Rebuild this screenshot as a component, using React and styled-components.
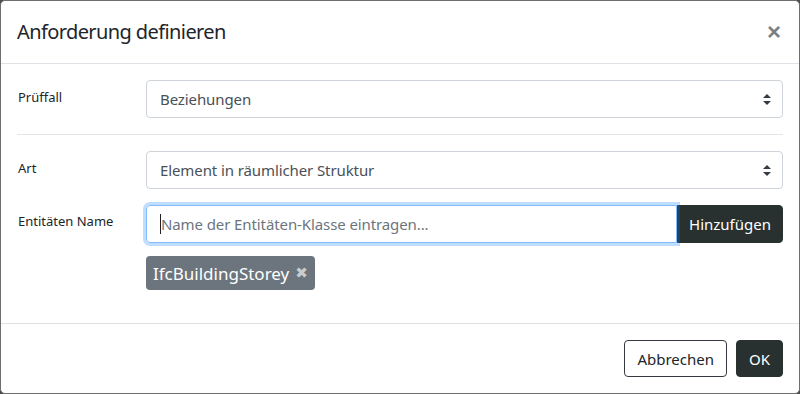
import React from "react";
import styled, { createGlobalStyle } from "styled-components";

const Global = createGlobalStyle`
  html, body { margin: 0; padding: 0; background: #4b4b4b; }
  body { font-family: "Noto Sans", "Open Sans", sans-serif; color: #212529; }
  * { box-sizing: border-box; }
`;

const Dialog = styled.div`
  width: 800px;
  height: 394px;
  background: #fff;
  border: 1px solid #6e6e6e;
  border-radius: 5px;
  display: flex;
  flex-direction: column;
  overflow: hidden;
`;

const Header = styled.div`
  display: flex;
  align-items: center;
  justify-content: space-between;
  padding: 16px;
  height: 63px;
  border-bottom: 1px solid #dee2e6;
`;

const Title = styled.h5`
  margin: 0;
  font-size: 20px;
  font-weight: 400;
  line-height: 30px;
  letter-spacing: -0.6px;
`;

const Close = styled.button`
  border: 0;
  background: transparent;
  padding: 0;
  margin-right: 2px;
  font-size: 24px;
  font-weight: 700;
  line-height: 1;
  color: #000;
  opacity: 0.5;
  font-family: "Liberation Sans", sans-serif;
  cursor: pointer;
`;

const Body = styled.div`
  flex: 1;
  padding: 16px;
`;

const Row = styled.div`
  display: grid;
  grid-template-columns: 129px 1fr;
  margin-bottom: ${(p) => p.$mb ?? 16}px;
`;

const Label = styled.label`
  font-size: 13px;
  padding-top: ${(p) => p.$pt ?? 8}px;
  line-height: 20px;
  padding-left: 1px;
`;

const Divider = styled.hr`
  margin: 0 0 16px;
  border: 0;
  border-top: 1px solid rgba(0, 0, 0, 0.1);
`;

const SelectBox = styled.div`
  height: 38px;
  border: 1px solid #ced4da;
  border-radius: 4px;
  display: flex;
  align-items: center;
  justify-content: space-between;
  padding: 0 11px 0 13px;
  font-size: 15px;
  color: #495057;
  letter-spacing: -0.1px;
`;

const InputGroup = styled.div`
  display: flex;
  height: 38px;
`;

const TextInput = styled.div`
  flex: 1;
  border: 1px solid #80bdff;
  border-radius: 4px 0 0 4px;
  box-shadow: 0 0 0 3px rgba(0, 123, 255, 0.25);
  display: flex;
  align-items: center;
  padding: 0 13px;
  font-size: 15px;
  color: #6c757d;
  letter-spacing: -0.1px;
  position: relative;
  z-index: 1;
`;

const Caret = styled.span`
  display: inline-block;
  width: 1px;
  height: 20px;
  background: #222;
`;

const DarkButton = styled.button`
  background: #283130;
  color: #fff;
  border: 1px solid #283130;
  font-family: inherit;
  font-size: 15px;
  padding: 0 ${(p) => p.$px ?? 11}px;
  border-radius: ${(p) => p.$radius || "4px"};
  height: ${(p) => p.$h || 38}px;
  cursor: pointer;
`;

const OutlineButton = styled.button`
  background: #fff;
  color: #212529;
  border: 1px solid #343a40;
  font-family: inherit;
  font-size: 15px;
  padding: 0 12px;
  border-radius: 4px;
  height: 37px;
  cursor: pointer;
`;

const TagRow = styled.div`
  display: flex;
  gap: 6px;
  padding-top: 13px;
`;

const Tag = styled.span`
  display: inline-flex;
  align-items: center;
  gap: 6px;
  height: 34px;
  padding: 0 7px 0 7px;
  background: #6c757d;
  color: #fff;
  border-radius: 4px;
  font-size: 17px;
`;

const TagX = styled.span`
  color: #c9cdd0;
  font-size: 15px;
  font-weight: 700;
  font-family: "DejaVu Sans", sans-serif;
  line-height: 1;
`;

const Footer = styled.div`
  border-top: 1px solid #dee2e6;
  padding: 16px;
  display: flex;
  justify-content: flex-end;
  gap: 9px;
`;

const Arrows = () => (
  <svg width="8" height="11" viewBox="0 0 8 11">
    <path d="M4 0 L8 4 H0 Z M4 11 L0 7 H8 Z" fill="#343a40" />
  </svg>
);

export default function App() {
  return (
    <>
      <Global />
      <Dialog>
        <Header>
          <Title>Anforderung definieren</Title>
          <Close aria-label="Close">×</Close>
        </Header>
        <Body>
          <Row>
            <Label $pt={7}>Prüffall</Label>
            <SelectBox>
              <span>Beziehungen</span>
              <Arrows />
            </SelectBox>
          </Row>
          <Divider />
          <Row>
            <Label $pt={7}>Art</Label>
            <SelectBox>
              <span>Element in räumlicher Struktur</span>
              <Arrows />
            </SelectBox>
          </Row>
          <Row $mb={16}>
            <Label $pt={6}>Entitäten Name</Label>
            <div>
              <InputGroup>
                <TextInput>
                  <Caret />
                  <span>Name der Entitäten-Klasse eintragen...</span>
                </TextInput>
                <DarkButton $radius="0 4px 4px 0">Hinzufügen</DarkButton>
              </InputGroup>
              <TagRow>
                <Tag>
                  IfcBuildingStorey <TagX>✖</TagX>
                </Tag>
              </TagRow>
            </div>
          </Row>
        </Body>
        <Footer>
          <OutlineButton>Abbrechen</OutlineButton>
          <DarkButton $h={37} $px={12}>OK</DarkButton>
        </Footer>
      </Dialog>
    </>
  );
}
